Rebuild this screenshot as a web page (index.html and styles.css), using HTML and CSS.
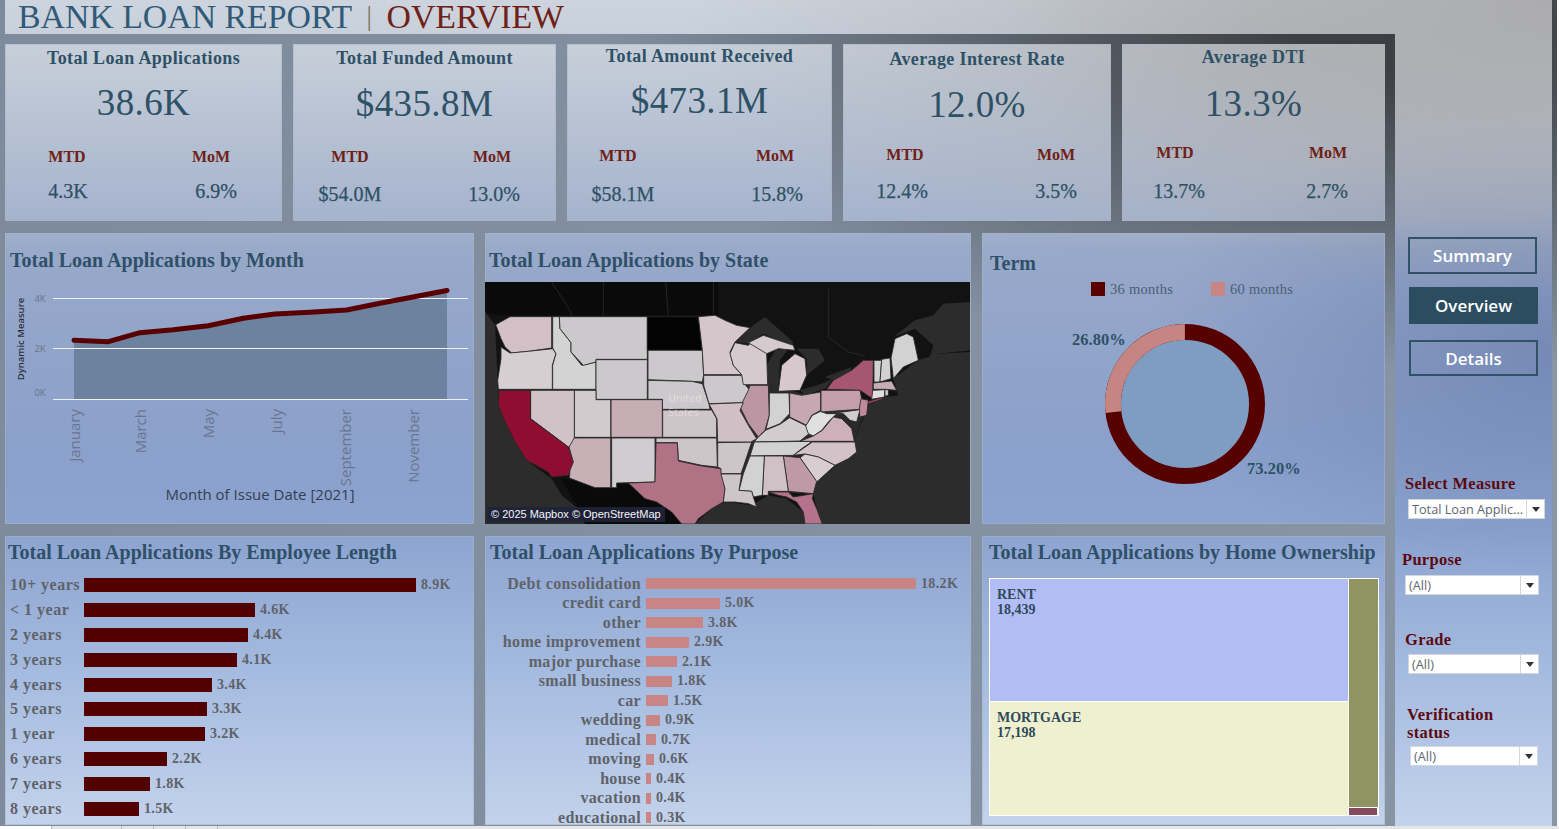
FILE: index.html
```html
<!DOCTYPE html>
<html lang="en">
<head>
<meta charset="utf-8">
<title>Bank Loan Report | Overview</title>
<link rel="stylesheet" href="styles.css">
</head>
<body>
<div class="app">
  <main class="main">
    <header class="title"><h1><span class="t-blue">BANK LOAN REPORT</span><span class="t-sep">|</span><span class="t-red">OVERVIEW</span></h1></header>

    <section class="kpis">
      <article class="kpi kpi-1">
        <h2>Total Loan Applications</h2><p class="big">38.6K</p>
        <div class="labels"><span>MTD</span><span>MoM</span></div>
        <div class="vals"><span>4.3K</span><span>6.9%</span></div>
      </article>
      <article class="kpi kpi-2">
        <h2>Total Funded Amount</h2><p class="big">$435.8M</p>
        <div class="labels"><span>MTD</span><span>MoM</span></div>
        <div class="vals"><span>$54.0M</span><span>13.0%</span></div>
      </article>
      <article class="kpi kpi-3">
        <h2>Total Amount Received</h2><p class="big">$473.1M</p>
        <div class="labels"><span>MTD</span><span>MoM</span></div>
        <div class="vals"><span>$58.1M</span><span>15.8%</span></div>
      </article>
      <article class="kpi kpi-4">
        <h2>Average Interest Rate</h2><p class="big">12.0%</p>
        <div class="labels"><span>MTD</span><span>MoM</span></div>
        <div class="vals"><span>12.4%</span><span>3.5%</span></div>
      </article>
      <article class="kpi kpi-5">
        <h2>Average DTI</h2><p class="big">13.3%</p>
        <div class="labels"><span>MTD</span><span>MoM</span></div>
        <div class="vals"><span>13.7%</span><span>2.7%</span></div>
      </article>
    </section>

    <section class="row row-mid">
      <article class="panel">
        <h3 class="ptitle">Total Loan Applications by Month</h3>
        <svg class="chart" viewBox="5 282 469 242" width="469" height="242">
          <polygon class="area" points="74,340.3 108.3,341.7 140,332.7 173.3,329.7 208.3,325.7 243.3,318.3 275,314 310,312.3 346.7,310 380,303.3 411.7,297.3 447,290.5 447,399 74,399"/>
          <line class="grid" x1="53" x2="468" y1="298.5" y2="298.5"/>
          <line class="grid" x1="53" x2="468" y1="348.5" y2="348.5"/>
          <line class="grid" x1="53" x2="468" y1="399.5" y2="399.5"/>
          <polyline class="trend" points="74,340.3 108.3,341.7 140,332.7 173.3,329.7 208.3,325.7 243.3,318.3 275,314 310,312.3 346.7,310 380,303.3 411.7,297.3 447,290.5"/>
          <text class="tick" x="40" y="302" text-anchor="middle">4K</text>
          <text class="tick" x="40" y="352" text-anchor="middle">2K</text>
          <text class="tick" x="40" y="396" text-anchor="middle">0K</text>
          <text class="ylabel" transform="translate(24 339) rotate(-90)" text-anchor="middle">Dynamic Measure</text>
          <text class="month" transform="translate(80 409) rotate(-90)" text-anchor="end">January</text>
          <text class="month" transform="translate(146 409) rotate(-90)" text-anchor="end">March</text>
          <text class="month" transform="translate(214 409) rotate(-90)" text-anchor="end">May</text>
          <text class="month" transform="translate(282 409) rotate(-90)" text-anchor="end">July</text>
          <text class="month" transform="translate(351 409) rotate(-90)" text-anchor="end">September</text>
          <text class="month" transform="translate(419 409) rotate(-90)" text-anchor="end">November</text>
          <text class="xlabel" x="260" y="500" text-anchor="middle">Month of Issue Date [2021]</text>
        </svg>
      </article>

      <article class="panel">
        <h3 class="ptitle ptitle-map">Total Loan Applications by State</h3>
        <div class="map">
          <svg viewBox="0 0 1455 726" width="485" height="242">
            <rect class="land" width="1455" height="726"/>
            <polygon class="land-deep" points="230,590 440,610 510,660 560,690 590,726 300,726 280,680"/>
            <polygon class="land-deep" points="0,0 700,0 700,100 40,100 0,90"/>
            <polygon class="water" points="0,90 30,128 38,295 40,370 60,420 90,480 125,535 200,590 230,640 280,680 300,726 0,726"/>
            <polygon class="water" points="630,726 680,680 720,660 800,670 850,640 905,650 955,690 962,726"/>
            <polygon class="water" points="1012,726 995,680 985,635 995,600 1050,550 1115,510 1110,470 1150,370 1200,345 1240,340 1225,290 1300,235 1360,215 1455,210 1455,726"/>
            <polygon class="water" points="1225,165 1290,115 1345,100 1375,65 1455,60 1455,205 1360,215 1325,275 1330,240 1345,190 1290,140"/>
            <polygon class="water" points="750,180 810,125 840,105 925,180 920,195 835,155 790,185"/>
            <polygon class="water" points="845,320 845,250 870,205 910,200 885,235 880,320 865,335"/>
            <polygon class="water" points="935,200 1000,200 1020,235 965,280 965,230"/>
            <polygon class="water" points="945,325 1010,305 1045,290 1020,320 960,340"/>
            <polygon class="water" points="1020,285 1100,255 1095,270 1045,295"/>
            <polyline class="border-faint" points="200,0 245,70 262,100"/>
            <polyline class="border-faint" points="355,0 355,100"/>
            <polyline class="border-faint" points="542,0 550,100"/>
            <polyline class="border-faint" points="685,0 685,95"/>
            <polyline class="border-faint" points="1030,20 1030,165 1090,210 1140,222"/>
            <polygon class="base" points="260,300 780,280 950,335 1150,360 1110,470 1115,510 995,600 985,635 800,628 715,660 650,560 300,590"/>

            <g class="states">
              <polygon class="s-wa" points="32,128 75,104 200,104 200,198 130,208 80,213 60,195 48,170"/>
              <polygon class="s-or" points="48,195 75,213 130,208 203,200 213,215 202,250 202,322 40,322 38,295 48,230"/>
              <polygon class="s-id" points="203,104 223,104 225,140 258,182 258,210 290,250 333,240 333,322 203,322 203,250 213,215 203,198"/>
              <polygon class="s-mt" points="223,104 487,104 487,232 333,232 333,240 295,250 258,210 258,182 225,140"/>
              <polygon class="s-nd" points="487,104 640,104 652,205 487,205"/>
              <polygon class="s-mt" points="489,205 652,205 656,278 652,300 620,298 489,293"/>
              <polygon class="s-mt" points="333,233 487,233 487,352 333,352"/>
              <polygon class="s-mt" points="489,295 620,298 652,305 672,365 675,382 532,382 532,352 489,352"/>
              <polygon class="s-co" points="378,353 532,353 532,466 378,466"/>
              <polygon class="s-ut" points="268,325 333,325 333,353 377,353 377,466 268,466"/>
              <polygon class="s-nv" points="137,325 268,325 268,490 250,495 137,410"/>
              <polygon class="s-ca" points="42,325 136,325 136,410 250,495 265,540 250,580 200,585 190,570 125,535 90,480 60,420 40,370"/>
              <polygon class="s-az" points="268,468 377,468 377,617 330,617 253,588 255,565 265,540 252,495"/>
              <polygon class="s-nm" points="380,468 510,468 510,600 395,603 395,617 380,617"/>
              <polygon class="s-ks" points="533,384 680,384 695,410 695,466 533,466"/>
              <polygon class="s-ks" points="513,468 695,468 697,555 650,550 580,535 577,482 513,482"/>
              <polygon class="s-tx" points="513,483 577,483 580,537 650,552 708,560 720,620 715,660 680,680 640,710 630,726 590,726 560,690 515,660 480,650 430,603 510,600"/>
              <polygon class="s-mn" points="640,104 690,100 720,115 755,130 795,137 750,180 735,210 745,250 770,278 656,278 652,205"/>
              <polygon class="s-mt" points="656,280 770,280 782,310 795,325 775,362 672,365 656,310"/>
              <polygon class="s-wi" points="735,215 750,182 790,190 810,170 840,195 845,215 848,308 775,308 770,278 745,250"/>
              <polygon class="s-wi" points="790,182 835,160 925,190 930,205 880,200 845,215"/>
              <polygon class="s-mi" points="880,328 890,250 930,215 960,230 965,280 945,325"/>
              <polygon class="s-il" points="795,310 850,310 853,400 840,445 820,465 790,425 765,375 790,325"/>
              <polygon class="s-in" points="853,333 912,333 914,395 885,425 843,442 853,400"/>
              <polygon class="s-oh" points="914,333 950,340 1007,330 1007,385 980,400 965,430 914,405"/>
              <polygon class="s-ky" points="815,470 843,444 885,427 914,407 965,432 972,455 945,477 808,480"/>
              <polygon class="s-in" points="808,480 982,478 950,500 925,520 795,522"/>
              <polygon class="s-wv" points="962,432 982,400 1007,388 1025,395 1055,395 1030,420 1010,445 985,462 970,455"/>
              <polygon class="s-va" points="945,478 985,462 1012,445 1045,405 1070,410 1100,440 1108,478"/>
              <polygon class="s-nc" points="925,520 982,480 1110,480 1115,510 1090,530 1050,550 1000,525 960,516"/>
              <polygon class="s-sc" points="945,527 960,516 1000,525 1050,550 995,600"/>
              <polygon class="s-ga" points="895,522 945,527 995,598 985,635 910,628"/>
              <polygon class="s-al" points="838,522 895,522 910,628 850,628 850,640 832,640"/>
              <polygon class="s-in" points="795,522 838,522 832,640 805,645 800,628 762,625 775,575"/>
              <polygon class="s-ks" points="698,482 800,480 775,555 768,575 708,575 708,560 698,555"/>
              <polygon class="s-ks" points="708,576 770,576 762,625 800,628 805,645 815,675 790,665 750,660 715,660 720,620"/>
              <polygon class="s-mo" points="672,366 775,362 765,385 790,430 815,470 798,480 698,480 696,410"/>
              <polygon class="s-fl" points="850,630 910,630 925,645 985,635 982,650 995,680 1012,726 960,726 955,690 935,660 905,645 880,640"/>
              <polygon class="s-ny" points="1025,322 1045,295 1100,265 1135,235 1165,235 1163,350 1125,325"/>
              <polygon class="s-nj2" points="1145,360 1195,345 1190,352 1150,366"/>
              <polygon class="s-pa" points="1008,325 1125,325 1130,350 1145,355 1125,382 1008,390"/>
              <polygon class="s-nj" points="1128,350 1150,355 1145,400 1125,405 1122,385"/>
              <polygon class="s-ut" points="1050,393 1125,383 1115,420 1095,415 1075,395"/>
              <polygon class="s-in" points="1167,235 1190,235 1185,300 1167,300"/>
              <polygon class="s-in" points="1190,232 1215,228 1218,290 1185,300"/>
              <polygon class="s-in" points="1218,228 1230,170 1265,155 1285,165 1300,235 1255,255 1225,290"/>
              <polygon class="s-co" points="1165,303 1220,297 1235,325 1200,322 1165,322"/>
              <polygon class="s-wv" points="1163,325 1200,323 1198,345 1160,352"/>
              <polygon class="s-in" points="1200,323 1210,323 1210,340 1200,343"/>
            </g>
            <text class="map-city" x="550" y="360">United</text>
            <text class="map-city" x="550" y="402">States</text>
          </svg>
          <span class="attrib">© 2025 Mapbox © OpenStreetMap</span>
        </div>
      </article>

      <article class="panel panel-term">
        <h3 class="ptitle ptitle-term">Term</h3>
        <div class="legend">
          <span class="lg"><i class="sw sw-dark"></i>36 months</span>
          <span class="lg"><i class="sw sw-pink"></i>60 months</span>
        </div>
        <svg class="donut" viewBox="982 300 403 200" width="403" height="200">
          <circle class="hole" cx="1185" cy="404" r="66"/>
          <circle class="ring-dark" cx="1185" cy="404" r="72"/>
          <circle class="ring-pink" cx="1185" cy="404" r="72" pathLength="100" transform="rotate(173.52 1185 404)"/>
          <text class="pct" x="1072" y="345">26.80%</text>
          <text class="pct" x="1247" y="474">73.20%</text>
        </svg>
      </article>
    </section>

    <section class="row row-bot">
      <article class="panel">
        <h3 class="ptitle ptitle-low ptitle-emp">Total Loan Applications By Employee Length</h3>
        <div class="bars bars-emp">
          <div class="bar-row"><span class="bar-l">10+ years</span><i class="bar" style="width:332px"></i><span class="bar-v">8.9K</span></div>
          <div class="bar-row"><span class="bar-l">&lt; 1 year</span><i class="bar" style="width:171px"></i><span class="bar-v">4.6K</span></div>
          <div class="bar-row"><span class="bar-l">2 years</span><i class="bar" style="width:164px"></i><span class="bar-v">4.4K</span></div>
          <div class="bar-row"><span class="bar-l">3 years</span><i class="bar" style="width:153px"></i><span class="bar-v">4.1K</span></div>
          <div class="bar-row"><span class="bar-l">4 years</span><i class="bar" style="width:128px"></i><span class="bar-v">3.4K</span></div>
          <div class="bar-row"><span class="bar-l">5 years</span><i class="bar" style="width:123px"></i><span class="bar-v">3.3K</span></div>
          <div class="bar-row"><span class="bar-l">1 year</span><i class="bar" style="width:121px"></i><span class="bar-v">3.2K</span></div>
          <div class="bar-row"><span class="bar-l">6 years</span><i class="bar" style="width:83px"></i><span class="bar-v">2.2K</span></div>
          <div class="bar-row"><span class="bar-l">7 years</span><i class="bar" style="width:66px"></i><span class="bar-v">1.8K</span></div>
          <div class="bar-row"><span class="bar-l">8 years</span><i class="bar" style="width:55px"></i><span class="bar-v">1.5K</span></div>
        </div>
      </article>

      <article class="panel">
        <h3 class="ptitle ptitle-low ptitle-pur">Total Loan Applications By Purpose</h3>
        <div class="bars bars-pur">
          <div class="bar-row"><span class="bar-l">Debt consolidation</span><i class="bar" style="width:270px"></i><span class="bar-v">18.2K</span></div>
          <div class="bar-row"><span class="bar-l">credit card</span><i class="bar" style="width:74px"></i><span class="bar-v">5.0K</span></div>
          <div class="bar-row"><span class="bar-l">other</span><i class="bar" style="width:57px"></i><span class="bar-v">3.8K</span></div>
          <div class="bar-row"><span class="bar-l">home improvement</span><i class="bar" style="width:43px"></i><span class="bar-v">2.9K</span></div>
          <div class="bar-row"><span class="bar-l">major purchase</span><i class="bar" style="width:31px"></i><span class="bar-v">2.1K</span></div>
          <div class="bar-row"><span class="bar-l">small business</span><i class="bar" style="width:26px"></i><span class="bar-v">1.8K</span></div>
          <div class="bar-row"><span class="bar-l">car</span><i class="bar" style="width:22px"></i><span class="bar-v">1.5K</span></div>
          <div class="bar-row"><span class="bar-l">wedding</span><i class="bar" style="width:14px"></i><span class="bar-v">0.9K</span></div>
          <div class="bar-row"><span class="bar-l">medical</span><i class="bar" style="width:10px"></i><span class="bar-v">0.7K</span></div>
          <div class="bar-row"><span class="bar-l">moving</span><i class="bar" style="width:8px"></i><span class="bar-v">0.6K</span></div>
          <div class="bar-row"><span class="bar-l">house</span><i class="bar" style="width:5px"></i><span class="bar-v">0.4K</span></div>
          <div class="bar-row"><span class="bar-l">vacation</span><i class="bar" style="width:5px"></i><span class="bar-v">0.4K</span></div>
          <div class="bar-row"><span class="bar-l">educational</span><i class="bar" style="width:5px"></i><span class="bar-v">0.3K</span></div>
        </div>
      </article>

      <article class="panel">
        <h3 class="ptitle ptitle-low ptitle-home">Total Loan Applications by Home Ownership</h3>
        <div class="tree">
          <div class="tree-main">
            <div class="cell cell-rent"><b>RENT</b><b>18,439</b></div>
            <div class="cell cell-mort"><b>MORTGAGE</b><b>17,198</b></div>
          </div>
          <div class="tree-side">
            <div class="cell-olive"></div>
            <div class="cell-wine"></div>
          </div>
        </div>
      </article>
    </section>
  </main>

  <aside class="side">
    <nav class="nav">
      <a class="btn btn-sum">Summary</a>
      <a class="btn btn-on">Overview</a>
      <a class="btn btn-det">Details</a>
    </nav>
    <div class="filters">
      <div class="filter f-measure">
        <label>Select Measure</label>
        <div class="select"><span>Total Loan Applic...</span><i class="caret"></i></div>
      </div>
      <div class="filter f-purpose">
        <label>Purpose</label>
        <div class="select"><span>(All)</span><i class="caret"></i></div>
      </div>
      <div class="filter f-grade">
        <label>Grade</label>
        <div class="select"><span>(All)</span><i class="caret"></i></div>
      </div>
      <div class="filter f-verif">
        <label>Verification<br>status</label>
        <div class="select"><span>(All)</span><i class="caret"></i></div>
      </div>
    </div>
  </aside>
  <div class="edge"></div>
</div>
<footer class="tabs"><i class="tab t1"></i><i class="tab t2"></i><i class="tab t3"></i><i class="tab t4"></i><i class="tab t5"></i></footer>
</body>
</html>
```

FILE: styles.css
```css
:root {
  --serif: "Liberation Serif", "Times New Roman", serif;
  --sans: "Open Sans", "Noto Sans", sans-serif;
  --ink: #2e5166;
  --red: #6f2117;
  --sheet:
    radial-gradient(ellipse 560px 300px at 100% 0, rgba(170,170,172,.95), rgba(170,170,172,0)),
    radial-gradient(ellipse 620px 230px at 1300px 40px, rgba(165,166,168,.6), rgba(165,166,168,0)),
    radial-gradient(ellipse 420px 230px at 100% 350px, rgba(95,115,165,.55), rgba(95,115,165,0)),
    linear-gradient(180deg, #cdd4dd 0, #c6ced9 50px, #a5b3cd 220px, #98a9c9 250px, #8ba0cb 440px, #8ca3d0 530px, #a6bce0 680px, #c4d3ec 829px);
  --gutter:
    radial-gradient(ellipse 800px 340px at 1400px 30px, #3c3f43 12%, rgba(60,63,67,0) 100%),
    linear-gradient(90deg, #7d8b9c 0, #8795a5 100%);
}
* { box-sizing: border-box; }
html, body { margin: 0; height: 100%; }
body { width: 1559px; height: 829px; overflow: hidden; background: #fff; font-family: var(--serif); }
h1, h2, h3, p { margin: 0; font-weight: normal; }

.app { display: flex; height: 826px; }
.main {
  width: 1395px; flex: none; padding: 0 10px 0 5px;
  background: var(--gutter); background-attachment: fixed;
  display: flex; flex-direction: column;
}
.title {
  height: 34px; margin: 0 -10px 10px 0;
  background: var(--sheet); background-attachment: fixed;
  padding: 1px 0 0 13px;
}
.title h1 { font-size: 33.8px; line-height: 32px; white-space: nowrap; }
.t-blue { color: #2f5a78; }
.t-sep { color: #7f7358; margin: 0 14.5px; font-size: 27px; position: relative; top: -3px; }
.t-red { color: var(--red); }

.kpis { display: flex; gap: 11px; height: 177px; }
.kpi, .panel {
  background: var(--sheet); background-attachment: fixed;
  box-shadow: inset 0 0 0 1px rgba(170,180,195,.55);
}
.kpi { color: var(--ink); text-align: center; }
.kpi h2 { font-size: 18px; line-height: 20px; font-weight: bold; letter-spacing: .38px; margin-top: var(--t1); }
.big { font-size: 37px; line-height: 40px; margin-top: var(--t2); letter-spacing: .4px; }
.labels, .vals { display: flex; justify-content: space-between; }
.labels span, .vals span { width: 90px; flex: none; }
.labels { margin-top: var(--t3); padding: 0 var(--lr) 0 var(--ll); font-size: 16px; line-height: 20px; font-weight: bold; color: var(--red); }
.vals { margin-top: var(--t4); padding: 0 var(--vr) 0 var(--vl); font-size: 20px; line-height: 20px; -webkit-text-stroke: .25px var(--ink); }
.kpi-1 { width: 277px; --t1: 4px; --t2: 15px; --t3: 24px; --t4: 14px; --ll: 17px; --lr: 26px; --vl: 18px; --vr: 21px; }
.kpi-2 { width: 263px; --t1: 4px; --t2: 16px; --t3: 23px; --t4: 17px; --ll: 12px; --lr: 19px; --vl: 12px; --vr: 17px; }
.kpi-3 { width: 265px; --t1: 2px; --t2: 15px; --t3: 25px; --t4: 18px; --ll: 6px; --lr: 12px; --vl: 11px; --vr: 10px; }
.kpi-4 { width: 268px; --t1: 5px; --t2: 16px; --t3: 20px; --t4: 16px; --ll: 17px; --lr: 10px; --vl: 14px; --vr: 10px; }
.kpi-5 { width: 263px; --t1: 3px; --t2: 17px; --t3: 19px; --t4: 18px; --ll: 8px; --lr: 12px; --vl: 12px; --vr: 13px; }

.row { display: flex; gap: 11px; }
.row .panel:nth-child(1) { width: 469px; }
.row .panel:nth-child(2) { width: 486px; }
.row .panel:nth-child(3) { width: 403px; }
.row-mid { margin-top: 12px; height: 291px; }
.row-bot { margin-top: 12px; height: 289px; overflow: hidden; }
.panel { position: relative; overflow: hidden; }

.ptitle { color: #2f5068; font-size: 20px; font-weight: bold; height: 49px; line-height: 54px; padding-left: 5px; white-space: nowrap; }
.ptitle-map { padding-left: 4px; }
.ptitle-term { padding-left: 8px; height: 49px; line-height: 60px; }
.ptitle-low { height: 36px; line-height: 33px; }
.ptitle-emp { padding-left: 3px; }
.ptitle-pur { padding-left: 5px; }
.ptitle-home { padding-left: 7px; }

.chart, .map svg, .donut { display: block; }
.grid { stroke: #eef2f8; stroke-width: 1; }
.area { fill: #6a7f9c; opacity: .93; }
.trend { fill: none; stroke: #590000; stroke-width: 5; stroke-linecap: round; stroke-linejoin: round; }
.tick { font: 9.5px var(--sans); fill: #667487; }
.ylabel { font: 600 9.5px var(--sans); fill: #2b2f38; }
.month { font: 15px var(--sans); fill: #69768d; }
.xlabel { font: 15px var(--sans); fill: #363f50; }

.map { position: relative; width: 485px; height: 242px; overflow: hidden; }
.land { fill: #121212; }
.land-deep { fill: #0a0a0a; }
.water { fill: #2c2c2c; }
.base { fill: #2a2a2a; }
.border-faint { fill: none; stroke: #333; stroke-width: 2; }
.states polygon { stroke: #2a2a2a; stroke-width: 2.6; stroke-linejoin: round; }
.map-city { font: 32px var(--sans); fill: rgba(255,255,255,.42); }
.s-wa { fill: #d3c0c6; } .s-or { fill: #d7ced2; } .s-id { fill: #d4d3d4; } .s-mt { fill: #cbc9cb; }
.s-nd { fill: #030303; } .s-co { fill: #c7aeb5; } .s-ut { fill: #d1cbce; } .s-nv { fill: #d0c3c8; }
.s-ca { fill: #8f0d30; } .s-az { fill: #c8b0b7; } .s-nm { fill: #d0cdd0; } .s-ks { fill: #cdc5c8; }
.s-tx { fill: #b27286; } .s-mn { fill: #d5c6cb; } .s-wi { fill: #d5cbcf; } .s-mi { fill: #d7c8ce; }
.s-il { fill: #bd96a3; } .s-in { fill: #d2d2d2; } .s-oh { fill: #c7a8b2; } .s-ky { fill: #d3ccce; }
.s-wv { fill: #e0e0e0; } .s-va { fill: #cdb0ba; } .s-nc { fill: #d3c2c8; } .s-sc { fill: #d8cdd1; }
.s-ga { fill: #bf9aa6; } .s-al { fill: #cfc1c5; } .s-mo { fill: #d0c0c6; } .s-fl { fill: #b5738b; }
.s-ny { fill: #a75672; } .s-pa { fill: #c49eab; } .s-nj { fill: #c08a9c; } .s-nj2 { fill: #b0425f; }
.attrib {
  position: absolute; left: 2px; bottom: 2px; padding: 0 4px; height: 15px;
  background: rgba(32,36,58,.9); color: #f2f4f8; font: 11px/15px "Liberation Sans", Arial, sans-serif; white-space: nowrap;
}

.panel-term { display: flex; flex-direction: column; }
.legend { display: flex; margin-left: 109px; height: 18px; color: #4b6075; font-size: 14.5px; letter-spacing: .25px; gap: 38px; }
.lg { display: flex; align-items: flex-start; line-height: 15px; }
.sw { width: 14px; height: 14px; margin-right: 5px; flex: none; }
.sw-dark { background: #590000; }
.sw-pink { background: #c98583; }
.hole { fill: #7f9dc3; }
.ring-dark, .ring-pink { fill: none; stroke-width: 16; }
.ring-dark { stroke: #570000; }
.ring-pink { stroke: #c58582; stroke-dasharray: 26.8 73.2; }
.pct { font: bold 16.5px var(--serif); fill: #2e5166; }

.bars { display: flex; flex-direction: column; }
.bar-row { display: flex; align-items: center; color: #5f6369; font-weight: bold; white-space: nowrap; }
.bar { display: block; flex: none; }
.bars-emp { padding-top: 1px; }
.bars-emp .bar-row { height: 24.8px; }
.bars-emp .bar-l { width: 79px; padding-left: 5px; flex: none; font-size: 16px; letter-spacing: .5px; }
.bars-emp .bar { height: 14px; background: #530000; }
.bars-emp .bar-v { margin-left: 5px; font-size: 14px; letter-spacing: .35px; }
.bars-pur { padding-top: 2px; }
.bars-pur .bar-row { height: 19.5px; }
.bars-pur .bar-l { width: 156px; margin-right: 5px; text-align: right; flex: none; font-size: 16px; letter-spacing: .35px; }
.bars-pur .bar { height: 11px; background: #c98583; }
.bars-pur .bar-v { margin-left: 5px; font-size: 14px; letter-spacing: .35px; }

.tree { position: absolute; left: 7px; top: 42px; width: 390px; height: 238px; display: flex; background: #fff; padding: 1px; gap: 1px; }
.tree-main { width: 358px; display: flex; flex-direction: column; gap: 1px; }
.cell { padding: 8px 7px; display: flex; flex-direction: column; color: #2e4a5c; font-size: 14px; line-height: 15px; }
.cell-rent { height: 122px; background: #b3bdf5; }
.cell-mort { flex: 1; background: #eff0cf; }
.tree-side { flex: 1; display: flex; flex-direction: column; gap: 1px; }
.cell-olive { flex: 1; background: #8f9460; }
.cell-wine { height: 7px; margin-right: 1px; background: #854a5e; }

.side { flex: 1; background: var(--sheet); background-attachment: fixed; padding-top: 237px; position: relative; }
.edge { width: 5px; flex: none; background: var(--gutter); background-attachment: fixed; margin-right: 2px; }
.nav { display: flex; flex-direction: column; }
.btn {
  height: 37px; width: 129px; border: 2px solid #2f5266; color: #fff;
  font: 600 17px/33px var(--sans); text-align: center; display: block;
}
.btn-sum { margin-left: 13px; }
.btn-on { margin: 13px 0 0 14px; background: #2b4d5f; border-color: #2b4d5f; }
.btn-det { margin: 16px 0 0 14px; height: 36px; line-height: 33px; }

.filters { display: flex; flex-direction: column; }
.filter label { display: block; color: #5c0a10; font-weight: bold; font-size: 16.5px; line-height: 18px; letter-spacing: .3px; }
.select {
  height: 20px; background: #fff; border: 1px solid #d3d6da; display: flex; align-items: center;
  font: 12.7px/18px var(--sans); color: #5e6670; padding-left: 3px; position: relative; margin-top: 6px;
}
.select span { flex: 1; white-space: nowrap; overflow: hidden; }
.caret { width: 18px; height: 18px; border-left: 1px solid #d3d6da; position: relative; flex: none; }
.caret::after { content: ""; position: absolute; left: 5px; top: 7px; border: 4px solid transparent; border-top: 5px solid #333; border-bottom: 0; }
.f-measure { margin: 99px 12px 0 10px; }
.f-measure .select { margin: 6px -5px 0 3px; width: 137px; }
.f-purpose { margin: 32px 0 0 7px; }
.f-purpose .select { width: 134px; margin-left: 3px; }
.f-grade { margin: 36px 0 0 10px; }
.f-grade .select { width: 131px; margin-top: 5px; margin-left: 3px; }
.f-verif { margin: 32px 0 0 12px; }
.f-verif .select { width: 128px; margin-top: 4px; margin-left: 3px; }

.tabs { height: 3px; background: #e6e6e6; position: relative; display: flex; }
.tab { display: block; height: 3px; border-right: 1px solid #b9b9b9; }
.t1 { width: 52px; background: #fff; }
.t2 { width: 70px; } .t3 { width: 32px; } .t4 { width: 32px; } .t5 { width: 32px; }
```
